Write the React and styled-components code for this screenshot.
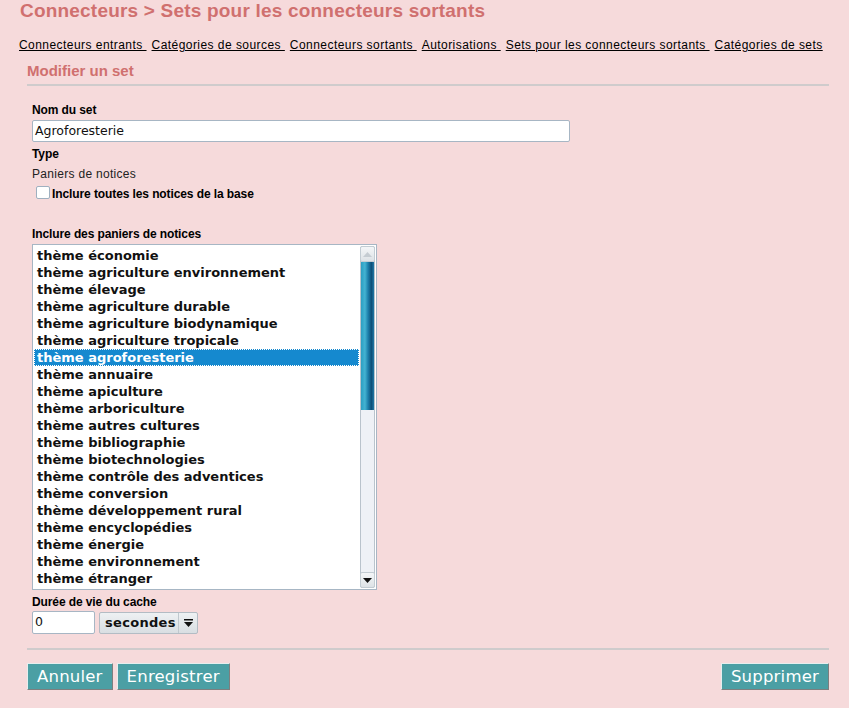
import React, { useState } from 'react'
import styled, { createGlobalStyle } from 'styled-components'

const GlobalStyle = createGlobalStyle`
  html, body {
    margin: 0;
    background: #f6dadb;
    font-family: "Liberation Sans", Arial, sans-serif;
  }
`

const Page = styled.div`
  padding: 0 20px 0 19px;
  height: 708px;
  box-sizing: border-box;
  overflow: hidden;
`
const Title = styled.h1`
  margin: 0;
  padding: 1px 0 0 1px;
  font-size: 19px;
  line-height: 20px;
  letter-spacing: 0.2px;
  font-weight: bold;
  color: #d0706f;
`
const Nav = styled.div`
  display: flex;
  gap: 5px;
  margin-top: 16px;
  font-size: 12px;
  letter-spacing: 0.45px;
  line-height: 16px;
`
const NavLink = styled.a`
  color: #000;
  text-decoration: underline;
  white-space: pre;
`
const Panel = styled.div`
  margin-left: 8px;
`
const PanelTitle = styled.h2`
  margin: 9px 0 0;
  padding-bottom: 4px;
  font-size: 15px;
  line-height: 18px;
  font-weight: bold;
  color: #d0706f;
  border-bottom: 2px solid #cfcbcc;
`
const Form = styled.div`
  padding: 17px 0 0 5px;
  display: flex;
  flex-direction: column;
`
const Label = styled.div`
  font-size: 12px;
  font-weight: bold;
  line-height: 14px;
  letter-spacing: -0.1px;
  margin-top: ${p => p.$top || 0}px;
`
const TextInput = styled.div`
  margin-top: 3px;
  width: ${p => p.$width}px;
  height: 22px;
  box-sizing: border-box;
  background: #fff;
  border: 1px solid #a7b6c4;
  border-radius: 2px;
  padding: 0 2px;
  font-family: "DejaVu Sans", sans-serif;
  font-size: 12.5px;
  line-height: 20px;
  color: #111;
`
const Value = styled.div`
  margin-top: 6px;
  font-size: 12px;
  letter-spacing: 0.3px;
  line-height: 14px;
  color: #222;
`
const CheckRow = styled.label`
  margin-top: 6px;
  margin-left: 4px;
  display: flex;
  align-items: center;
  gap: 2px;
`
const Box = styled.span`
  width: 12px;
  height: 11px;
  border: 1px solid #9fb0c0;
  border-radius: 2px;
  background: #fff;
  margin-top: -4px;
`
const ListWrap = styled.div`
  margin-top: 3px;
  width: 345px;
  height: 346px;
  box-sizing: border-box;
  border: 1px solid #a7b6c4;
  background: #fff;
  display: flex;
  overflow: hidden;
`
const Items = styled.div`
  flex: 1;
  padding: 2px 1px 0 1px;
  overflow: hidden;
`
const Item = styled.div`
  height: 17px;
  line-height: 17px;
  padding-left: 3px;
  font-family: "DejaVu Sans", sans-serif;
  font-weight: bold;
  font-size: 13px;
  white-space: nowrap;
  box-sizing: border-box;
  color: ${p => (p.$selected ? '#fff' : '#111')};
  background: ${p => (p.$selected ? '#1589cf' : 'transparent')};
  outline: ${p => (p.$selected ? '1px dotted #fff' : 'none')};
  outline-offset: -1px;
`
const Scrollbar = styled.div`
  width: 13px;
  margin: 1px 1px 1px 0;
  background: #eef1f6;
  border: 1px solid #b9c3cc;
  border-radius: 2px;
  display: flex;
  flex-direction: column;
`
const ScrollButton = styled.div`
  height: 14px;
  background: linear-gradient(#f4f6f8, #dde2e6);
  border: 1px solid #c3ccd3;
  border-radius: 2px;
  margin: -1px;
  display: flex;
  align-items: center;
  justify-content: center;
`
const Thumb = styled.div`
  margin-top: 1px;
  height: 148px;
  background: linear-gradient(
    90deg,
    #2a9ec2 0%,
    #43b3d2 30%,
    #1b7eaa 55%,
    #0d4f78 80%,
    #2079a6 100%
  );
`
const Track = styled.div`
  flex: 1;
`
const ControlsRow = styled.div`
  margin-top: 2px;
  display: flex;
  gap: 4px;
  align-items: center;
`
const Select = styled.div`
  width: 99px;
  height: 22px;
  box-sizing: border-box;
  border: 1px solid #b3bcc4;
  border-radius: 2px;
  background: linear-gradient(#eef1f3, #d9dee2);
  display: flex;
  align-items: center;
  font-family: "DejaVu Sans", sans-serif;
  font-weight: bold;
  font-size: 13px;
  letter-spacing: 0.3px;
  color: #111;
`
const SelectText = styled.span`
  flex: 1;
  padding-left: 5px;
`
const SelectArrow = styled.span`
  width: 18px;
  height: 100%;
  border-left: 1px solid #c0c8ce;
  display: flex;
  align-items: center;
  justify-content: center;
`
const Separator = styled.div`
  margin-top: 14px;
  margin-left: -5px;
  border-top: 2px solid #cfcbcc;
`
const Actions = styled.div`
  margin: 13px 0 0 -5px;
  display: flex;
  gap: 4px;
`
const Button = styled.button`
  margin-left: ${p => (p.$push ? 'auto' : '0')};
  height: 27px;
  padding: 0 9px;
  background: #4b9fa4;
  color: #fff;
  font-family: "DejaVu Sans", sans-serif;
  font-size: 16.5px;
  line-height: 23px;
  border: 1px solid;
  border-color: #e6eeee #7e7e7e #7e7e7e #e6eeee;
  letter-spacing: 0.2px;
`

const links = [
  'Connecteurs entrants',
  'Catégories de sources',
  'Connecteurs sortants',
  'Autorisations',
  'Sets pour les connecteurs sortants',
  'Catégories de sets',
]

const themes = [
  'économie',
  'agriculture environnement',
  'élevage',
  'agriculture durable',
  'agriculture biodynamique',
  'agriculture tropicale',
  'agroforesterie',
  'annuaire',
  'apiculture',
  'arboriculture',
  'autres cultures',
  'bibliographie',
  'biotechnologies',
  'contrôle des adventices',
  'conversion',
  'développement rural',
  'encyclopédies',
  'énergie',
  'environnement',
  'étranger',
]

const App = () => {
  const [selected, setSelected] = useState('agroforesterie')
  return (
    <Page>
      <GlobalStyle />
      <Title>Connecteurs &gt; Sets pour les connecteurs sortants</Title>
      <Nav>
        {links.map((l, i) => (
          <NavLink key={l}>{i < links.length - 1 ? l + ' ' : l}</NavLink>
        ))}
      </Nav>
      <Panel>
        <PanelTitle>Modifier un set</PanelTitle>
        <Form>
          <Label>Nom du set</Label>
          <TextInput $width={538}>Agroforesterie</TextInput>
          <Label $top={5}>Type</Label>
          <Value>Paniers de notices</Value>
          <CheckRow>
            <Box />
            <Label>Inclure toutes les notices de la base</Label>
          </CheckRow>
          <Label $top={26}>Inclure des paniers de notices</Label>
          <ListWrap>
            <Items>
              {themes.map(t => (
                <Item
                  key={t}
                  $selected={t === selected}
                  onClick={() => setSelected(t)}
                >
                  thème {t}
                </Item>
              ))}
            </Items>
            <Scrollbar>
              <ScrollButton>
                <svg width="9" height="5" viewBox="0 0 9 5">
                  <path d="M0 5 L4.5 0 L9 5 Z" fill="#c5ccd2" />
                </svg>
              </ScrollButton>
              <Thumb />
              <Track />
              <ScrollButton>
                <svg width="9" height="5" viewBox="0 0 9 5">
                  <path d="M0 0 L9 0 L4.5 5 Z" fill="#111" />
                </svg>
              </ScrollButton>
            </Scrollbar>
          </ListWrap>
          <Label $top={5}>Durée de vie du cache</Label>
          <ControlsRow>
            <TextInput $width={63} style={{ marginTop: 0, height: 23 }}>
              0
            </TextInput>
            <Select>
              <SelectText>secondes</SelectText>
              <SelectArrow>
                <svg width="9" height="8" viewBox="0 0 9 8">
                  <rect x="0" y="0" width="9" height="1.5" fill="#111" />
                  <path d="M0 3 L9 3 L4.5 8 Z" fill="#111" />
                </svg>
              </SelectArrow>
            </Select>
          </ControlsRow>
          <Separator />
          <Actions>
            <Button>Annuler</Button>
            <Button>Enregistrer</Button>
            <Button $push>Supprimer</Button>
          </Actions>
        </Form>
      </Panel>
    </Page>
  )
}

export default App
